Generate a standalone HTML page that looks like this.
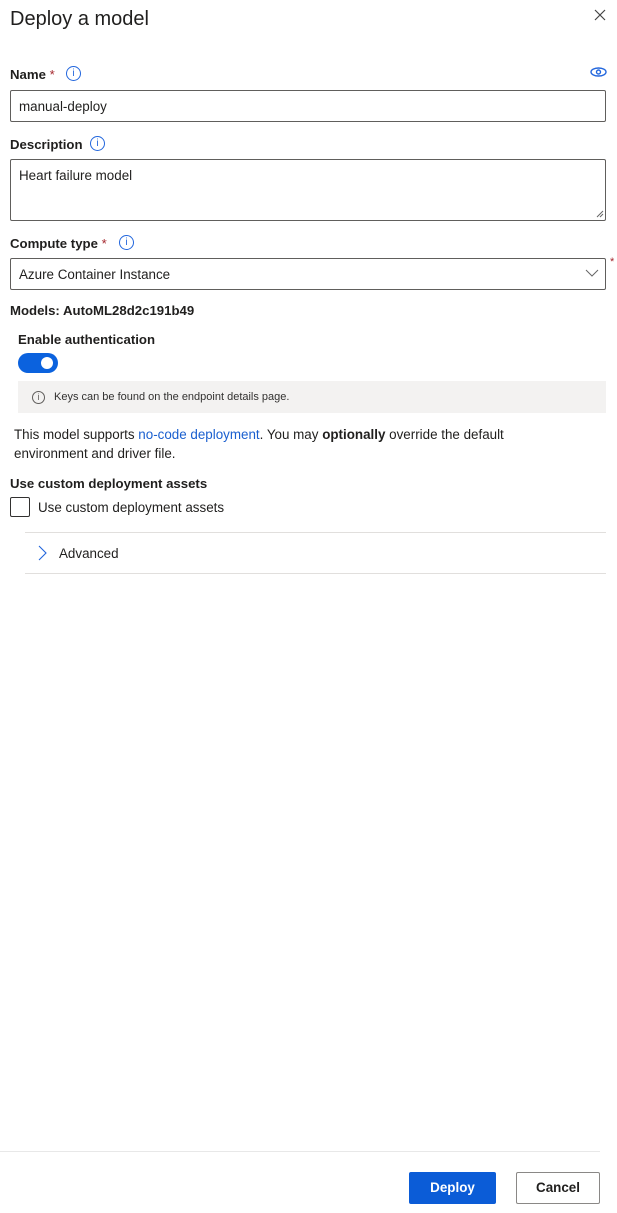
<!DOCTYPE html>
<html><head><meta charset="utf-8"><style>
*{box-sizing:border-box;margin:0;padding:0}
body{width:617px;height:1213px;background:#fff;font-family:"Liberation Sans",sans-serif;color:#201f1e;position:relative;overflow:hidden;font-size:13.4px}
.a{position:absolute;white-space:nowrap}
.lbl{font-weight:bold;font-size:13.2px}
.box{position:absolute;border:1px solid #605e5c;border-radius:2px;background:#fff}
.info{position:absolute;width:15px;height:15px;border:1px solid #2266dd;border-radius:50%;color:#2266dd;font-size:10px;line-height:13px;text-align:center}
.star{color:#a4262c;font-weight:normal}
</style></head><body>
<div class="a" style="left:10px;top:7px;font-size:20px;line-height:24px">Deploy a model</div>
<svg class="a" style="left:594px;top:9px" width="12" height="12"><path d="M1 1L11 11M11 1L1 11" stroke="#444" stroke-width="1.2"/></svg>

<div class="a lbl" style="left:10px;top:67px">Name <span class="star">*</span></div>
<div class="info" style="left:66px;top:66px">i</div>
<svg class="a" style="left:590px;top:66px" width="17" height="12"><ellipse cx="8.5" cy="6" rx="7.5" ry="4" fill="none" stroke="#2266dd" stroke-width="1.4"/><circle cx="8.5" cy="6" r="2" fill="none" stroke="#2266dd" stroke-width="1.4"/></svg>
<div class="box" style="left:10px;top:90px;width:596px;height:32px"></div>
<div class="a" style="left:19px;top:99px">manual-deploy</div>

<div class="a lbl" style="left:10px;top:137px">Description</div>
<div class="info" style="left:90px;top:136px">i</div>
<div class="box" style="left:10px;top:159px;width:596px;height:62px"></div>
<div class="a" style="left:19px;top:168px">Heart failure model</div>
<svg class="a" style="left:596px;top:210px" width="8" height="8"><path d="M1 7L7 1M4 7L7 4" stroke="#666"/></svg>

<div class="a lbl" style="left:10px;top:236px">Compute type <span class="star">*</span></div>
<div class="info" style="left:119px;top:235px">i</div>
<div class="box" style="left:10px;top:258px;width:596px;height:32px"></div>
<div class="a" style="left:19px;top:267px">Azure Container Instance</div>
<svg class="a" style="left:585px;top:269px" width="14" height="9"><path d="M1 1L7 7L13 1" fill="none" stroke="#666"/></svg>
<div class="a" style="left:610px;top:256px;color:#a4262c;font-size:11px">*</div>

<div class="a lbl" style="left:10px;top:303px">Models: AutoML28d2c191b49</div>
<div class="a lbl" style="left:18px;top:332px">Enable authentication</div>
<div class="a" style="left:18px;top:353px;width:40px;height:20px;border-radius:10px;background:#0b62de"></div>
<div class="a" style="left:41px;top:357px;width:12px;height:12px;border-radius:50%;background:#fff"></div>
<div class="a" style="left:18px;top:381px;width:588px;height:32px;background:#f3f2f1"></div>
<div class="info" style="left:32px;top:391px;border-color:#605e5c;color:#605e5c;width:13px;height:13px;line-height:11px;font-size:9px">i</div>
<div class="a" style="left:54px;top:391px;font-size:11px;color:#323130">Keys can be found on the endpoint details page.</div>
<div class="a" style="left:14px;top:425px;line-height:19px;color:#201f1e">This model supports <span style="color:#1a5fcf">no-code deployment</span>. You may <b>optionally</b> override the default<br>environment and driver file.</div>

<div class="a lbl" style="left:10px;top:476px">Use custom deployment assets</div>
<div class="a" style="left:10px;top:497px;width:20px;height:20px;border:1px solid #323130;border-radius:2px"></div>
<div class="a" style="left:38px;top:500px">Use custom deployment assets</div>

<div class="a" style="left:25px;top:532px;width:581px;height:1px;background:#e1dfdd"></div>
<svg class="a" style="left:38px;top:545px" width="9" height="16"><path d="M1 1L8 8L1 15" fill="none" stroke="#2266dd" stroke-width="1.1"/></svg>
<div class="a" style="left:59px;top:546px">Advanced</div>
<div class="a" style="left:25px;top:573px;width:581px;height:1px;background:#e1dfdd"></div>

<div class="a" style="left:0;top:1151px;width:600px;height:1px;background:#e8e8e8"></div>
<div class="a" style="left:409px;top:1172px;width:87px;height:32px;background:#0b5cd7;border-radius:2px;color:#fff;font-weight:bold;text-align:center;line-height:32px">Deploy</div>
<div class="a" style="left:516px;top:1172px;width:84px;height:32px;border:1px solid #8a8886;border-radius:2px;font-weight:bold;text-align:center;line-height:30px">Cancel</div>
</body></html>
